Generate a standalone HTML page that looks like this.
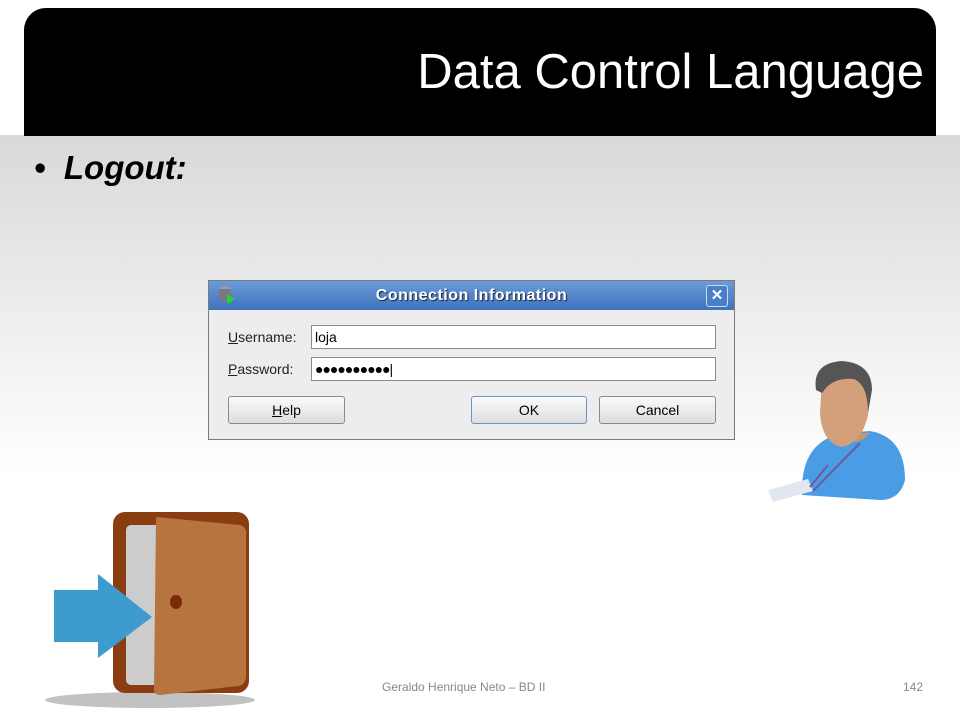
<!DOCTYPE html><html><head><style>
body{margin:0;width:960px;height:720px;position:relative;overflow:hidden;background:#fff;font-family:"Liberation Sans",sans-serif}
.bg{position:absolute;left:0;top:135px;width:960px;height:340px;background:linear-gradient(#d9d9d9,#fff)}
.hdr{position:absolute;left:24px;top:8px;width:912px;height:128px;background:#000;border-radius:22px 22px 0 0}
.hdr div{position:absolute;right:12px;top:36px;color:#fff;font-size:49px}
.bul{position:absolute;left:34px;top:149px;font-size:33px;font-weight:bold;font-style:italic}
.dlg{position:absolute;left:208px;top:280px;width:527px;height:160px;border:1px solid #7a7a7a;background:#ededed;box-sizing:border-box}
.tb{height:29px;background:linear-gradient(#6b9bd8,#3d72bd);color:#fff;font-weight:bold;font-size:16px;text-align:center;line-height:29px;text-shadow:1px 1px 1px #223;letter-spacing:.5px}
.x{position:absolute;right:6px;top:4px;width:20px;height:20px;border:1px solid #cde;border-radius:3px;background:#4a7fc8;color:#fff;font-size:15px;font-weight:bold;line-height:20px;text-align:center}
.lbl{position:absolute;left:19px;font-size:14px;color:#222}
.inp{position:absolute;left:102px;width:405px;height:24px;border:1px solid #8a8a8a;background:#fff;box-sizing:border-box;font-size:14px;line-height:22px;padding-left:3px}
.btn{position:absolute;top:115px;height:28px;border:1px solid #8a8a8a;border-radius:3px;background:linear-gradient(#fafafa,#ddd);box-sizing:border-box;text-align:center;font-size:14px;line-height:26px}
.ft{position:absolute;top:680px;font-size:12px;color:#888}
</style></head><body>
<div class="bg"></div>
<div class="hdr"><div>Data Control Language</div></div>
<div class="bul">•&nbsp;&nbsp;Logout:</div>
<div class="dlg">
<div class="tb">Connection Information</div>
<svg style="position:absolute;left:8px;top:4px" width="20" height="22"><ellipse cx="8" cy="4" rx="6" ry="3" fill="#99a"/><rect x="2" y="4" width="12" height="12" fill="#778"/><path d="M10 9 L18 14 L10 19Z" fill="#3c3"/></svg>
<div class="x">✕</div>
<div class="lbl" style="top:48px"><u>U</u>sername:</div>
<div class="inp" style="top:44px">loja</div>
<div class="lbl" style="top:80px"><u>P</u>assword:</div>
<div class="inp" style="top:76px;letter-spacing:-1px">●●●●●●●●●●|</div>
<div class="btn" style="left:19px;width:117px"><u>H</u>elp</div>
<div class="btn" style="left:262px;width:116px;border-color:#6f93c8">OK</div>
<div class="btn" style="left:390px;width:117px">Cancel</div>
</div>
<svg style="position:absolute;left:40px;top:505px" width="230" height="215">
<ellipse cx="110" cy="195" rx="105" ry="8" fill="#999" opacity=".6"/>
<rect x="73" y="7" width="136" height="181" rx="12" fill="#8a3d10"/>
<rect x="86" y="20" width="70" height="160" rx="5" fill="#ccc"/>
<path d="M116 12 L200 20 Q207 22 206 30 L206 170 Q206 180 198 181 L120 190 Q114 190 114 184 Z" fill="#b8743f"/>
<ellipse cx="136" cy="97" rx="6" ry="7" fill="#7a2a0a"/>
<path d="M14 85 L58 85 L58 69 L112 112 L58 153 L58 137 L14 137Z" fill="#3d9ccd"/>
</svg>
<svg style="position:absolute;left:760px;top:355px" width="160" height="150">
<path d="M42 140 Q40 85 85 78 L110 76 Q145 82 145 125 Q140 145 120 145Z" fill="#4a9de4"/>
<path d="M85 78 Q95 95 110 78Z" fill="#c89472"/>
<path d="M62 25 Q75 10 95 13 Q112 20 108 60 Q102 88 82 92 Q62 88 60 58Z" fill="#d4a07c"/>
<path d="M56 35 Q52 8 82 6 Q112 8 112 35 L108 58 Q108 30 94 24 Q72 22 62 38Z" fill="#555"/>
<path d="M8 135 L48 124 L53 136 L13 147Z" fill="#e2e6ee"/>
<path d="M50 132 L68 110 M53 136 L100 88" stroke="#6a5aa0" stroke-width="2" fill="none"/>
</svg>
<div class="ft" style="left:382px">Geraldo Henrique Neto – BD II</div>
<div class="ft" style="left:903px">142</div>
</body></html>
